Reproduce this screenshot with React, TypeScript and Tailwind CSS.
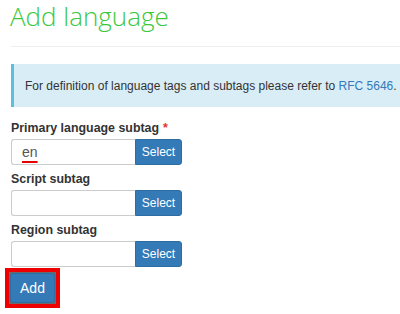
import React from "react";

function Field({ label, required, value }: { label: string; required?: boolean; value?: string }) {
  return (
    <div className="flex flex-col">
      <div className="h-[19px] leading-[19px] text-[12.4px] font-bold text-[#333] mb-px">
        {label}
        {required && <span className="text-[#e3342f] ml-[4px]">*</span>}
      </div>
      <div className="flex h-[26px] w-[171px]">
        <div className="w-[124px] h-full border border-[#ccc] border-r-0 rounded-l-[3px] bg-white flex items-center pl-[10px] text-[14px] text-[#555]">
          {value && (
            <span className="underline decoration-[#e60000] decoration-2 underline-offset-[4px]">{value}</span>
          )}
        </div>
        <button className="w-[47px] h-full bg-[#337ab7] border border-[#2e6da4] rounded-r-[3px] text-white text-[12px] flex items-center justify-center">
          Select
        </button>
      </div>
    </div>
  );
}

export default function App() {
  return (
    <div
      className="w-[400px] h-[314px] overflow-hidden bg-white pl-[11px]"
      style={{ fontFamily: '"Liberation Sans", Arial, sans-serif' }}
    >
      <h1
        className="text-[26px] font-light leading-[30px] text-[#3cc83c] pt-[1px] h-[46px] -ml-[1px]"
        style={{ fontFamily: '"Open Sans", sans-serif' }}
      >
        Add language
      </h1>
      <div className="h-px bg-[#eee] w-[400px]" />
      <div className="mt-[17px] w-[420px] h-[43px] bg-[#d9edf7] border-l-[3px] border-[#5bc0de] flex items-center pl-[11px] text-[12px] text-[#333] whitespace-nowrap">
        For definition of language tags and subtags please refer to&nbsp;
        <span className="text-[#337ab7]">RFC 5646</span>.
      </div>
      <div className="mt-[12px] flex flex-col gap-[5px]">
        <Field label="Primary language subtag" required value="en" />
        <Field label="Script subtag" />
        <Field label="Region subtag" />
      </div>
      <div className="-ml-[6px] mt-px inline-flex border-[4px] border-[#ee0000] p-px bg-[#6a6a6a]">
        <button className="w-[45px] h-[30px] bg-[#337ab7] border border-[#2e6da4] rounded-[3px] text-white text-[14px] flex items-center justify-center">
          Add
        </button>
      </div>
    </div>
  );
}
